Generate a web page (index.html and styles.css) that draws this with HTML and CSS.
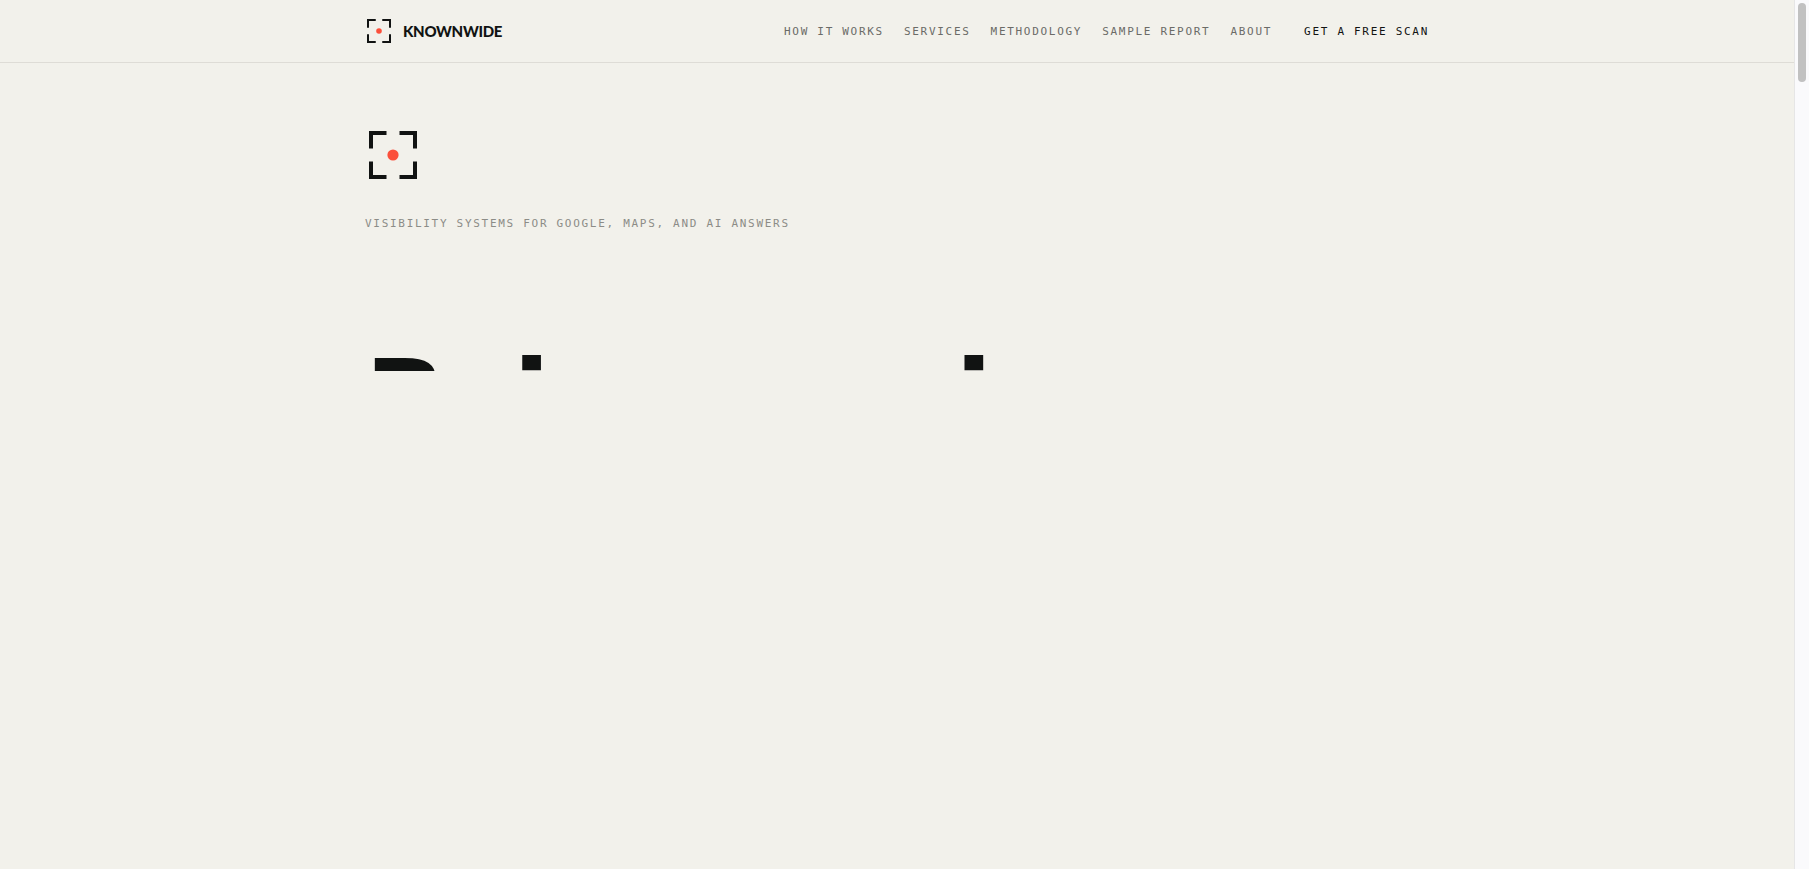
FILE: index.html
```html
<!DOCTYPE html>
<html lang="en">

<head>
    <meta charset="UTF-8">
    <meta name="viewport" content="width=device-width, initial-scale=1.0">
    <title>Knownwide</title>
    <link rel="stylesheet" href="styles.css">
</head>

<body>
    <div class="page">
        <header class="header">
            <div class="container header-inner">
                <a href="#" class="brand">
                    <svg class="brand-mark" viewBox="0 0 56 56" aria-hidden="true">
                        <path d="M21.5 6H6v15.5M34.5 6H50v15.5M6 34.5V50h15.5M50 34.5V50H34.5" />
                        <circle cx="28" cy="28" r="5.6" />
                    </svg>
                    <span>KNOWNWIDE</span>
                </a>
                <nav class="nav">
                    <a href="#how">HOW IT WORKS</a>
                    <a href="#services">SERVICES</a>
                    <a href="#methodology">METHODOLOGY</a>
                    <a href="#report">SAMPLE REPORT</a>
                    <a href="#about">ABOUT</a>
                    <a href="#scan" class="nav-cta">GET A FREE SCAN</a>
                </nav>
            </div>
        </header>
        <main class="container hero">
            <svg class="hero-mark" viewBox="0 0 56 56" aria-hidden="true">
                <path d="M21.5 6H6v15.5M34.5 6H50v15.5M6 34.5V50h15.5M50 34.5V50H34.5" />
                <circle cx="28" cy="28" r="5.6" />
            </svg>
            <p class="eyebrow">VISIBILITY SYSTEMS FOR GOOGLE, MAPS, AND AI ANSWERS</p>
            <h1 class="title">Being our icon</h1>
        </main>
    </div>
    <div class="scrollbar" aria-hidden="true">
        <div class="thumb"></div>
    </div>
</body>

</html>
```
FILE: styles.css
```css
body{
    margin: 0;
    display: flex;
    min-height: 100vh;
    background-color: #f2f1eb;
    color: #111312;
    font-family: "DejaVu Sans", sans-serif;
}
a{
    color: inherit;
    text-decoration: none;
}
.page{
    flex: 1;
    min-width: 0;
}
.container{
    box-sizing: border-box;
    max-width: 1160px;
    margin: 0 auto;
    padding: 0 48px;
}
.header{
    border-bottom: 1px solid #dedcd6;
}
.header-inner{
    display: flex;
    align-items: center;
    justify-content: space-between;
    height: 62px;
}
.brand{
    display: flex;
    align-items: center;
    gap: 10px;
    font-family: Lato, sans-serif;
    font-size: 15px;
    font-weight: 900;
    letter-spacing: -0.02em;
}
.brand-mark{
    width: 28px;
    height: 28px;
}
.hero-mark{
    display: block;
    width: 56px;
    height: 56px;
}
svg path{
    fill: none;
    stroke: #111312;
    stroke-width: 4;
}
svg circle{
    fill: #fb503b;
}
.nav{
    display: flex;
    gap: 20px;
    font-family: "DejaVu Sans Mono", monospace;
    font-size: 11px;
    letter-spacing: 0.155em;
    color: #6b6b67;
}
.nav-cta{
    margin-left: 12px;
    color: #111312;
}
.hero{
    padding-top: 64px;
}
.eyebrow{
    margin: 32px 0 0;
    font-family: "DejaVu Sans Mono", monospace;
    font-size: 11px;
    line-height: 18px;
    letter-spacing: 0.155em;
    color: #8c8c87;
}
.title{
    box-sizing: border-box;
    height: 48px;
    margin: 90px 0 0;
    overflow: hidden;
    white-space: nowrap;
    font-size: 107px;
    line-height: 152px;
    font-weight: 700;
    letter-spacing: -3px;
}
.scrollbar{
    box-sizing: border-box;
    width: 15px;
    padding: 3px 3px 0;
    border-left: 1px solid #e6e6e6;
    background-color: #fafafc;
}
.thumb{
    width: 8px;
    height: 79px;
    border-radius: 4px;
    background-color: #c1c1c1;
}
```
